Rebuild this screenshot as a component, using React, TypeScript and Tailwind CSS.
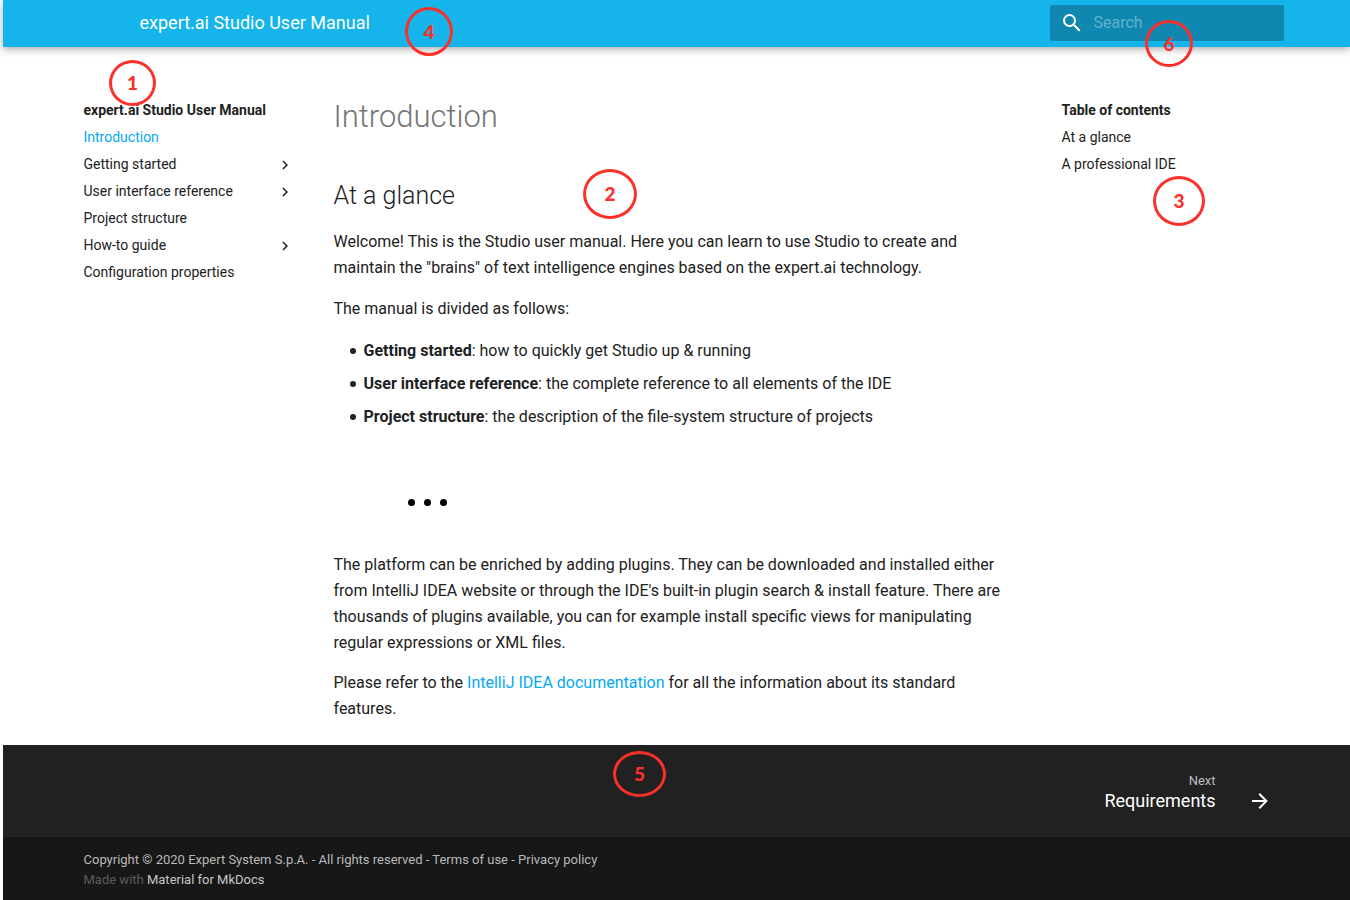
import React from "react";

const navItems = [
  { label: "Introduction", active: true },
  { label: "Getting started", nested: true },
  { label: "User interface reference", nested: true },
  { label: "Project structure" },
  { label: "How-to guide", nested: true },
  { label: "Configuration properties" },
];

const topics = [
  { name: "Getting started", text: "how to quickly get Studio up & running" },
  { name: "User interface reference", text: "the complete reference to all elements of the IDE" },
  { name: "Project structure", text: "the description of the file-system structure of projects" },
];

const callouts = [
  { n: 1, box: "left-[109px] top-[60px] w-[47px] h-[46px]" },
  { n: 2, box: "left-[583px] top-[169px] w-[54px] h-[50px]" },
  { n: 3, box: "left-[1153px] top-[176px] w-[52px] h-[50px]" },
  { n: 4, box: "left-[405px] top-[7px] w-[48px] h-[49px]" },
  { n: 5, box: "left-[613px] top-[751px] w-[53px] h-[46px]" },
  { n: 6, box: "left-[1145px] top-[20px] w-[48px] h-[47px]" },
];

function Icon({ d, className }: { d: string; className: string }) {
  return (
    <svg viewBox="0 0 24 24" fill="currentColor" className={className} aria-hidden="true">
      <path d={d} />
    </svg>
  );
}

const SEARCH =
  "M9.5 3A6.5 6.5 0 0 1 16 9.5c0 1.61-.59 3.09-1.56 4.23l.27.27h.79l5 5-1.5 1.5-5-5v-.79l-.27-.27A6.516 6.516 0 0 1 9.5 16 6.5 6.5 0 0 1 3 9.5 6.5 6.5 0 0 1 9.5 3m0 2C7 5 5 7 5 9.5S7 14 9.5 14 14 12 14 9.5 12 5 9.5 5z";
const CHEVRON = "M8.59 16.58 13.17 12 8.59 7.41 10 6l6 6-6 6-1.41-1.42z";
const ARROW = "M4 11v2h12l-5.5 5.5 1.42 1.42L19.84 12l-7.92-7.92L10.5 5.5 16 11H4z";

export default function App() {
  return (
    <div className="relative min-h-screen bg-white pl-[3px] font-['Roboto',sans-serif] text-base text-[#212121]">
      <header className="relative bg-[#15b4eb] text-white shadow-[0_2px_8px_rgba(0,0,0,0.35)]">
        <div className="mx-auto flex h-[47px] max-w-[1220px] items-center justify-between pr-[3px] pb-[2px] pl-[73px]">
          <a href="#home" className="text-lg leading-6">expert.ai Studio User Manual</a>
          <label className="flex h-9 w-[234px] items-center rounded-xs bg-[#1087b0] pl-[10px]">
            <Icon d={SEARCH} className="size-6 shrink-0" />
            <input
              type="text"
              aria-label="Search"
              placeholder="Search"
              className="ml-[10px] w-full min-w-0 bg-transparent text-base outline-none placeholder:text-[#62b1cc]"
            />
          </label>
        </div>
      </header>

      <div className="mx-auto flex max-w-[1220px]">
        <nav aria-label="Manual" className="w-[242px] shrink-0 pt-[54px] pr-[15px] pl-[17px] text-sm leading-[19px]">
          <h2 className="font-bold">expert.ai Studio User Manual</h2>
          <ul>
            {navItems.map((item) => (
              <li key={item.label} className="mt-2">
                <a
                  href="#nav"
                  className={item.active ? "flex items-center justify-between text-[#03a9f4]" : "flex items-center justify-between"}
                >
                  {item.label}
                  {item.nested && <Icon d={CHEVRON} className="size-[18px]" />}
                </a>
              </li>
            ))}
          </ul>
        </nav>

        <main className="mr-6 ml-[25px] min-w-0 flex-1 pt-[49px] pb-[23px] leading-[26px]">
          <h1 className="mb-10 text-[31px] leading-[42px] font-light text-[#757575]">Introduction</h1>
          <h2 className="text-[25px] leading-[35px] font-light">At a glance</h2>
          <p className="mt-4">
            Welcome! This is the Studio user manual. Here you can learn to use Studio to create and maintain the
            "brains" of text intelligence engines based on the expert.ai technology.
          </p>
          <p className="mt-[15px]">The manual is divided as follows:</p>
          <ul className="mt-4 ml-4 flex flex-col gap-[7px]">
            {topics.map((t) => (
              <li key={t.name} className="flex items-center gap-2">
                <span className="size-[6px] shrink-0 rounded-full bg-[#212121]" aria-hidden="true" />
                <span>
                  <strong className="font-bold">{t.name}</strong>: {t.text}
                </span>
              </li>
            ))}
          </ul>
          <div className="mt-[69px] ml-[74px] flex gap-[9px]" aria-hidden="true">
            <span className="size-[7px] rounded-full bg-black" />
            <span className="size-[7px] rounded-full bg-black" />
            <span className="size-[7px] rounded-full bg-black" />
          </div>
          <p className="mt-[46px]">
            The platform can be enriched by adding plugins. They can be downloaded and installed either from IntelliJ
            IDEA website or through the IDE's built-in plugin search &amp; install feature. There are thousands of
            plugins available, you can for example install specific views for manipulating regular expressions or XML
            files.
          </p>
          <p className="mt-[14px]">
            Please refer to the <a href="#idea" className="text-[#03a9f4]">IntelliJ IDEA documentation</a> for all the
            information about its standard features.
          </p>
        </main>

        <nav aria-label="Table of contents" className="w-[242px] shrink-0 pt-[54px] pl-[17px] text-sm leading-[19px]">
          <h2 className="font-bold">Table of contents</h2>
          <ul>
            <li className="mt-2"><a href="#glance">At a glance</a></li>
            <li className="mt-2"><a href="#ide">A professional IDE</a></li>
          </ul>
        </nav>
      </div>

      <footer className="bg-[#212121] text-white">
        <div className="mx-auto flex h-[92px] max-w-[1220px] items-center justify-end pt-1 pr-[15px]">
          <a href="#requirements" className="flex items-end gap-8">
            <span className="flex flex-col text-right">
              <span className="text-[13px] leading-4 text-[#bcbcbc]">Next</span>
              <span className="text-lg leading-6">Requirements</span>
            </span>
            <Icon d={ARROW} className="size-6" />
          </a>
        </div>
        <div className="bg-[#171717]">
          <div className="mx-auto max-w-[1220px] px-[17px] pt-[13px] pb-[10px] text-[13px] leading-5 text-[#b9b9b9]">
            <p>
              Copyright © 2020 Expert System S.p.A. - All rights reserved - <a href="#terms">Terms of use</a> -{" "}
              <a href="#privacy">Privacy policy</a>
            </p>
            <p className="text-[#5d5d5d]">
              Made with <a href="#mkdocs" className="text-[#c5c5c5]">Material for MkDocs</a>
            </p>
          </div>
        </div>
      </footer>

      {callouts.map((c) => (
        <span
          key={c.n}
          className={`absolute flex items-center justify-center rounded-[50%] border-3 border-[#fc302b] font-['Lato',sans-serif] text-[19px] leading-6 font-black text-[#fc302b] ${c.box}`}
        >
          {c.n}
        </span>
      ))}
    </div>
  );
}
